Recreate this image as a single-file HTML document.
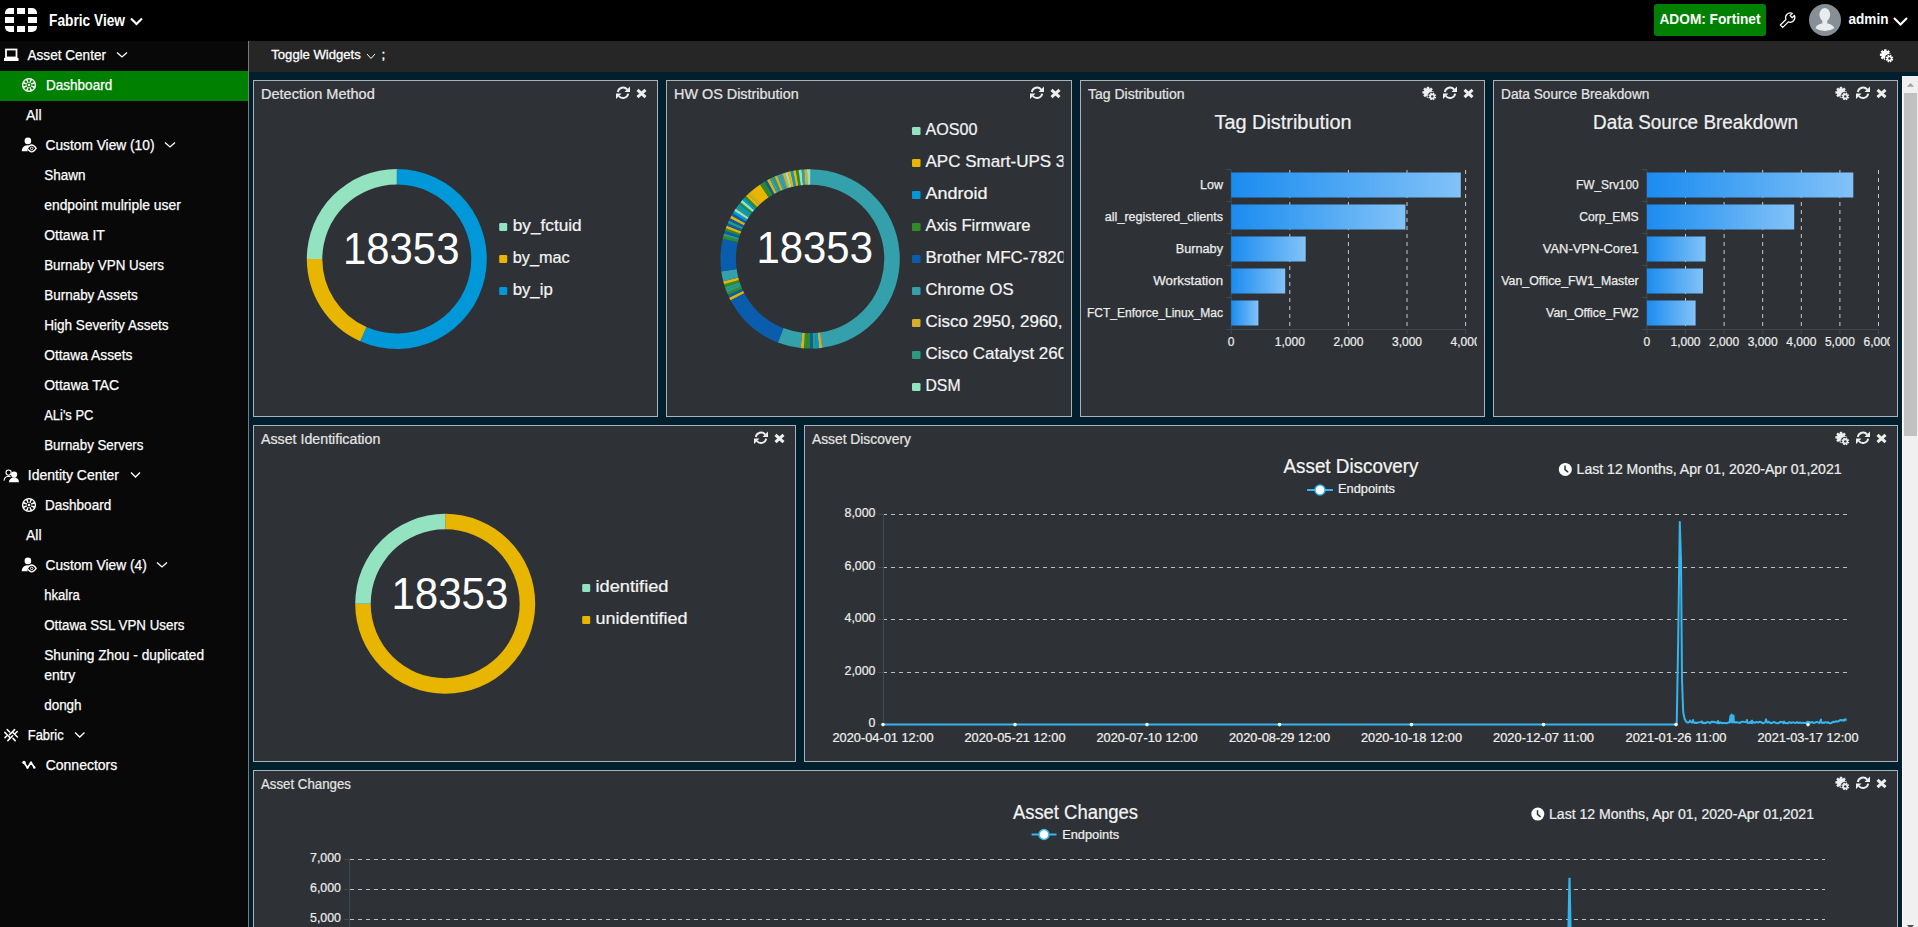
<!DOCTYPE html>
<html><head><meta charset="utf-8"><title>Fabric View</title>
<style>html,body{margin:0;padding:0;background:#021f2d;overflow:hidden}svg{display:block}text{font-family:"Liberation Sans", sans-serif}</style>
</head><body>
<svg width="1918" height="927" viewBox="0 0 1918 927" font-family='"Liberation Sans", sans-serif'>
<rect x="0" y="0" width="1918" height="927" fill="#021f2d"/>
<rect x="0" y="0" width="1918" height="41" fill="#000"/>
<rect x="0" y="41" width="248" height="886" fill="#080808"/>
<rect x="248" y="41" width="1" height="886" fill="#7a7a7a"/>
<rect x="249" y="41" width="1669" height="31" fill="#262626"/>
<clipPath id="logo"><rect x="5" y="8" width="32" height="24" rx="5" ry="5"/></clipPath>
<g clip-path="url(#logo)" fill="#fff">
<rect x="5" y="8" width="9" height="6"/>
<rect x="5" y="17" width="9" height="6"/>
<rect x="5" y="26" width="9" height="6"/>
<rect x="17" y="8" width="8" height="6"/>
<rect x="17" y="26" width="8" height="6"/>
<rect x="28" y="8" width="9" height="6"/>
<rect x="28" y="17" width="9" height="6"/>
<rect x="28" y="26" width="9" height="6"/>
</g>
<text x="49" y="25.5" font-size="16" fill="#fff" text-anchor="start" font-weight="bold" textLength="76" lengthAdjust="spacingAndGlyphs">Fabric View</text>
<polyline points="131,18.5 136.5,24 142,18.5" fill="none" stroke="#fff" stroke-width="2.2"/>
<rect x="1654" y="4" width="112" height="32" rx="3" fill="#008000"/>
<text x="1659.5" y="24" font-size="14" fill="#fff" text-anchor="start" font-weight="bold" textLength="101" lengthAdjust="spacingAndGlyphs">ADOM: Fortinet</text>
<g transform="translate(1790.2,17.6) rotate(45)" fill="none" stroke="#fff" stroke-width="1.25" stroke-linejoin="round"><path d="M-1.7,12.2 L-1.7,4.3 A4.7,4.7 0 0 1 -1.5,-4.45 L-1.5,-1.3 L1.5,-1.3 L1.5,-4.45 A4.7,4.7 0 0 1 1.7,4.3 L1.7,12.2 Z"/></g>
<circle cx="1825" cy="20" r="16" fill="#868e96"/>
<ellipse cx="1824.8" cy="14.6" rx="5.4" ry="6.5" fill="#e9ecef"/>
<rect x="1822.3" y="18" width="5" height="6.2" rx="1.5" fill="#e9ecef"/>
<path d="M1815.5,28.2 Q1816.5,24.6 1821.5,23.6 L1828,23.6 Q1833,24.6 1834.2,28.2 Q1830,31 1824.8,31 Q1819.5,31 1815.5,28.2 Z" fill="#e9ecef"/>
<text x="1848.5" y="24" font-size="14" fill="#fff" text-anchor="start" font-weight="bold" textLength="40" lengthAdjust="spacingAndGlyphs">admin</text>
<polyline points="1894,18 1900.5,24.5 1907,18" fill="none" stroke="#fff" stroke-width="2.2"/>
<text x="271.3" y="58.5" font-size="13.5" fill="#fff" text-anchor="start" font-weight="normal" textLength="89.5" lengthAdjust="spacingAndGlyphs" stroke="#fff" stroke-width="0.3">Toggle Widgets</text>
<polyline points="367,54 371.0,58.5 375,54" fill="none" stroke="#fff" stroke-width="1"/>
<text x="381.5" y="59" font-size="13.5" fill="#fff" text-anchor="start" font-weight="normal" stroke="#fff" stroke-width="0.4">;</text>
<g transform="translate(1880,49) scale(0.92)">
<circle cx="5.8" cy="6.2" r="4.3" fill="#fff"/>
<rect x="4.5" y="0.30000000000000027" width="2.6" height="2.6" fill="#fff" transform="rotate(0.0 5.8 6.2)"/>
<rect x="4.5" y="0.30000000000000027" width="2.6" height="2.6" fill="#fff" transform="rotate(45.0 5.8 6.2)"/>
<rect x="4.5" y="0.30000000000000027" width="2.6" height="2.6" fill="#fff" transform="rotate(90.0 5.8 6.2)"/>
<rect x="4.5" y="0.30000000000000027" width="2.6" height="2.6" fill="#fff" transform="rotate(135.0 5.8 6.2)"/>
<rect x="4.5" y="0.30000000000000027" width="2.6" height="2.6" fill="#fff" transform="rotate(180.0 5.8 6.2)"/>
<rect x="4.5" y="0.30000000000000027" width="2.6" height="2.6" fill="#fff" transform="rotate(225.0 5.8 6.2)"/>
<rect x="4.5" y="0.30000000000000027" width="2.6" height="2.6" fill="#fff" transform="rotate(270.0 5.8 6.2)"/>
<rect x="4.5" y="0.30000000000000027" width="2.6" height="2.6" fill="#fff" transform="rotate(315.0 5.8 6.2)"/>
<circle cx="10.3" cy="10.4" r="5.0" fill="#262626"/>
<circle cx="10.3" cy="10.4" r="3.0" fill="#fff"/>
<rect x="9.5" y="6.2" width="1.6" height="2.2" fill="#fff" transform="rotate(22.5 10.3 10.4)"/>
<rect x="9.5" y="6.2" width="1.6" height="2.2" fill="#fff" transform="rotate(67.5 10.3 10.4)"/>
<rect x="9.5" y="6.2" width="1.6" height="2.2" fill="#fff" transform="rotate(112.5 10.3 10.4)"/>
<rect x="9.5" y="6.2" width="1.6" height="2.2" fill="#fff" transform="rotate(157.5 10.3 10.4)"/>
<rect x="9.5" y="6.2" width="1.6" height="2.2" fill="#fff" transform="rotate(202.5 10.3 10.4)"/>
<rect x="9.5" y="6.2" width="1.6" height="2.2" fill="#fff" transform="rotate(247.5 10.3 10.4)"/>
<rect x="9.5" y="6.2" width="1.6" height="2.2" fill="#fff" transform="rotate(292.5 10.3 10.4)"/>
<rect x="9.5" y="6.2" width="1.6" height="2.2" fill="#fff" transform="rotate(337.5 10.3 10.4)"/>
<circle cx="10.3" cy="10.4" r="1.3" fill="#262626"/>
</g>
<rect x="6" y="49.5" width="10.5" height="8" fill="none" stroke="#fff" stroke-width="1.8"/>
<rect x="4" y="58" width="14.5" height="3" fill="#fff"/>
<text x="27.5" y="60" font-size="14" fill="#fff" text-anchor="start" font-weight="normal" textLength="78.5" lengthAdjust="spacingAndGlyphs" stroke="#fff" stroke-width="0.25">Asset Center</text>
<polyline points="117,52.5 122.0,57 127,52.5" fill="none" stroke="#fff" stroke-width="1.3"/>
<rect x="0" y="71" width="248" height="30" fill="#008000"/>
<circle cx="29" cy="85" r="7.1" fill="#fff"/>
<path d="M31.90,84.40 L34.60,83.65 L34.60,86.35 L31.90,85.60 Z" fill="#008000"/>
<path d="M31.47,86.63 L33.91,88.01 L32.01,89.91 L30.63,87.47 Z" fill="#008000"/>
<path d="M29.60,87.90 L30.35,90.60 L27.65,90.60 L28.40,87.90 Z" fill="#008000"/>
<path d="M27.37,87.47 L25.99,89.91 L24.09,88.01 L26.53,86.63 Z" fill="#008000"/>
<path d="M26.10,85.60 L23.40,86.35 L23.40,83.65 L26.10,84.40 Z" fill="#008000"/>
<path d="M26.53,83.37 L24.09,81.99 L25.99,80.09 L27.37,82.53 Z" fill="#008000"/>
<path d="M28.40,82.10 L27.65,79.40 L30.35,79.40 L29.60,82.10 Z" fill="#008000"/>
<path d="M30.63,82.53 L32.01,80.09 L33.91,81.99 L31.47,83.37 Z" fill="#008000"/>
<circle cx="29" cy="85" r="2.5" fill="#008000"/>
<circle cx="29" cy="85" r="1.3" fill="#fff"/>
<text x="46" y="90" font-size="14" fill="#fff" text-anchor="start" font-weight="normal" textLength="66.2" lengthAdjust="spacingAndGlyphs" stroke="#fff" stroke-width="0.25">Dashboard</text>
<text x="26" y="120" font-size="14" fill="#fff" text-anchor="start" font-weight="normal" stroke="#fff" stroke-width="0.25">All</text>
<circle cx="27.900000000000002" cy="140.9" r="3.3" fill="#fff"/>
<path d="M21.6,151.3 Q22.200000000000003,145.6 27.1,145.2 Q29.1,145.3 30.1,146 L26.8,148.4 L27.8,151.3 Z" fill="#fff"/>
<path d="M27.200000000000003,148.4 Q31.700000000000003,141.6 36.2,148.4 Q31.700000000000003,155.2 27.200000000000003,148.4 Z" fill="#080808" stroke="#fff" stroke-width="1.3"/>
<circle cx="31.700000000000003" cy="148.4" r="1.3" fill="none" stroke="#fff" stroke-width="0.9"/>
<text x="45.5" y="150" font-size="14" fill="#fff" text-anchor="start" font-weight="normal" textLength="109.0" lengthAdjust="spacingAndGlyphs" stroke="#fff" stroke-width="0.25">Custom View (10)</text>
<polyline points="165,142.5 170.0,147 175,142.5" fill="none" stroke="#fff" stroke-width="1.3"/>
<text x="44.2" y="180" font-size="14" fill="#fff" text-anchor="start" font-weight="normal" textLength="41.3" lengthAdjust="spacingAndGlyphs" stroke="#fff" stroke-width="0.25">Shawn</text>
<text x="44.2" y="210" font-size="14" fill="#fff" text-anchor="start" font-weight="normal" textLength="136.7" lengthAdjust="spacingAndGlyphs" stroke="#fff" stroke-width="0.25">endpoint mulriple user</text>
<text x="44.2" y="240" font-size="14" fill="#fff" text-anchor="start" font-weight="normal" stroke="#fff" stroke-width="0.25">Ottawa IT</text>
<text x="44.2" y="270" font-size="14" fill="#fff" text-anchor="start" font-weight="normal" textLength="119.8" lengthAdjust="spacingAndGlyphs" stroke="#fff" stroke-width="0.25">Burnaby VPN Users</text>
<text x="44.2" y="300" font-size="14" fill="#fff" text-anchor="start" font-weight="normal" textLength="93.6" lengthAdjust="spacingAndGlyphs" stroke="#fff" stroke-width="0.25">Burnaby Assets</text>
<text x="44.2" y="330" font-size="14" fill="#fff" text-anchor="start" font-weight="normal" textLength="124.4" lengthAdjust="spacingAndGlyphs" stroke="#fff" stroke-width="0.25">High Severity Assets</text>
<text x="44.2" y="360" font-size="14" fill="#fff" text-anchor="start" font-weight="normal" textLength="88.3" lengthAdjust="spacingAndGlyphs" stroke="#fff" stroke-width="0.25">Ottawa Assets</text>
<text x="44.2" y="390" font-size="14" fill="#fff" text-anchor="start" font-weight="normal" stroke="#fff" stroke-width="0.25">Ottawa TAC</text>
<text x="44.2" y="420" font-size="14" fill="#fff" text-anchor="start" font-weight="normal" textLength="49.2" lengthAdjust="spacingAndGlyphs" stroke="#fff" stroke-width="0.25">ALi's PC</text>
<text x="44.2" y="450" font-size="14" fill="#fff" text-anchor="start" font-weight="normal" textLength="99.2" lengthAdjust="spacingAndGlyphs" stroke="#fff" stroke-width="0.25">Burnaby Servers</text>
<g fill="none" stroke="#fff" stroke-width="1.1"><circle cx="8.6" cy="472.6" r="2.6"/><path d="M4,480.6 Q4.6,476.4 8.4,476.2 Q9.6,476.2 10.6,476.8"/></g>
<g fill="#fff"><circle cx="14.1" cy="474.6" r="3.1"/><path d="M8.8,482.2 Q9.6,477.6 14.1,477.6 Q18.6,477.6 19,482.2 Z"/></g>
<text x="27.8" y="480" font-size="14" fill="#fff" text-anchor="start" font-weight="normal" stroke="#fff" stroke-width="0.25">Identity Center</text>
<polyline points="131,472.5 135.5,477 140,472.5" fill="none" stroke="#fff" stroke-width="1.3"/>
<circle cx="29" cy="505" r="7.1" fill="#fff"/>
<path d="M31.90,504.40 L34.60,503.65 L34.60,506.35 L31.90,505.60 Z" fill="#080808"/>
<path d="M31.47,506.63 L33.91,508.01 L32.01,509.91 L30.63,507.47 Z" fill="#080808"/>
<path d="M29.60,507.90 L30.35,510.60 L27.65,510.60 L28.40,507.90 Z" fill="#080808"/>
<path d="M27.37,507.47 L25.99,509.91 L24.09,508.01 L26.53,506.63 Z" fill="#080808"/>
<path d="M26.10,505.60 L23.40,506.35 L23.40,503.65 L26.10,504.40 Z" fill="#080808"/>
<path d="M26.53,503.37 L24.09,501.99 L25.99,500.09 L27.37,502.53 Z" fill="#080808"/>
<path d="M28.40,502.10 L27.65,499.40 L30.35,499.40 L29.60,502.10 Z" fill="#080808"/>
<path d="M30.63,502.53 L32.01,500.09 L33.91,501.99 L31.47,503.37 Z" fill="#080808"/>
<circle cx="29" cy="505" r="2.5" fill="#080808"/>
<circle cx="29" cy="505" r="1.3" fill="#fff"/>
<text x="45" y="510" font-size="14" fill="#fff" text-anchor="start" font-weight="normal" textLength="66.2" lengthAdjust="spacingAndGlyphs" stroke="#fff" stroke-width="0.25">Dashboard</text>
<text x="26" y="540" font-size="14" fill="#fff" text-anchor="start" font-weight="normal" stroke="#fff" stroke-width="0.25">All</text>
<circle cx="27.900000000000002" cy="560.9" r="3.3" fill="#fff"/>
<path d="M21.6,571.3 Q22.200000000000003,565.6 27.1,565.2 Q29.1,565.3 30.1,566 L26.8,568.4 L27.8,571.3 Z" fill="#fff"/>
<path d="M27.200000000000003,568.4 Q31.700000000000003,561.6 36.2,568.4 Q31.700000000000003,575.2 27.200000000000003,568.4 Z" fill="#080808" stroke="#fff" stroke-width="1.3"/>
<circle cx="31.700000000000003" cy="568.4" r="1.3" fill="none" stroke="#fff" stroke-width="0.9"/>
<text x="45.5" y="570" font-size="14" fill="#fff" text-anchor="start" font-weight="normal" textLength="101.2" lengthAdjust="spacingAndGlyphs" stroke="#fff" stroke-width="0.25">Custom View (4)</text>
<polyline points="157,562.5 162.0,567 167,562.5" fill="none" stroke="#fff" stroke-width="1.3"/>
<text x="44.2" y="600" font-size="14" fill="#fff" text-anchor="start" font-weight="normal" textLength="35.7" lengthAdjust="spacingAndGlyphs" stroke="#fff" stroke-width="0.25">hkalra</text>
<text x="44.2" y="630" font-size="14" fill="#fff" text-anchor="start" font-weight="normal" textLength="140.3" lengthAdjust="spacingAndGlyphs" stroke="#fff" stroke-width="0.25">Ottawa SSL VPN Users</text>
<text x="44.2" y="660" font-size="14" fill="#fff" text-anchor="start" font-weight="normal" textLength="159.9" lengthAdjust="spacingAndGlyphs" stroke="#fff" stroke-width="0.25">Shuning Zhou - duplicated</text>
<text x="44.2" y="680" font-size="14" fill="#fff" text-anchor="start" font-weight="normal" stroke="#fff" stroke-width="0.25">entry</text>
<text x="44.2" y="710" font-size="14" fill="#fff" text-anchor="start" font-weight="normal" textLength="37.4" lengthAdjust="spacingAndGlyphs" stroke="#fff" stroke-width="0.25">dongh</text>
<g stroke="#fff" stroke-width="1.5" fill="none" stroke-linecap="round"><path d="M7.2,729.6 L9.6,732 M14.6,729.6 L9.6,734.6 M4.8,732.4 L7.6,735.2 L10.4,738 M12.4,732 L17.4,737 M7.8,740.6 L12.6,735.8 M13,738.4 L15.2,740.6 M5,737.6 L6.6,736 M15.4,733.2 L17.2,731.6"/></g>
<text x="27.8" y="740" font-size="14" fill="#fff" text-anchor="start" font-weight="normal" textLength="35.9" lengthAdjust="spacingAndGlyphs" stroke="#fff" stroke-width="0.25">Fabric</text>
<polyline points="75,732.5 79.75,737 84.5,732.5" fill="none" stroke="#fff" stroke-width="1.3"/>
<circle cx="24" cy="762.5" r="1.7" fill="#fff"/>
<polyline points="24,762.5 27.5,767.8 31,762.5 34.5,767.8" fill="none" stroke="#fff" stroke-width="1.7" stroke-linejoin="round"/>
<circle cx="31" cy="762.8" r="1.2" fill="#fff"/><circle cx="34.3" cy="767.5" r="1.2" fill="#fff"/><circle cx="27.5" cy="767.5" r="1.2" fill="#fff"/>
<text x="45.7" y="770" font-size="14" fill="#fff" text-anchor="start" font-weight="normal" stroke="#fff" stroke-width="0.25">Connectors</text>
<rect x="253.5" y="80.5" width="404" height="336" fill="#2e3236" stroke="#aab2b9" stroke-width="1"/>
<text x="261" y="98.5" font-size="14" fill="#e4e4e4" text-anchor="start" font-weight="normal" textLength="113.7" lengthAdjust="spacingAndGlyphs" stroke="#e4e4e4" stroke-width="0.22">Detection Method</text>
<path d="M637.5,89.8 L645.5,97.2 M645.5,89.8 L637.5,97.2" stroke="#eee" stroke-width="3" stroke-linecap="butt"/>
<g fill="none" stroke="#eee" stroke-width="1.9"><path d="M617.8,92.0 A5.3,5.3 0 0 1 627.2,89.6"/><path d="M628.2,93.6 A5.3,5.3 0 0 1 618.8,96.0"/></g>
<path d="M630,86.5 L630,92.0 L624.5,92.0 Z" fill="#eee"/>
<path d="M616,99.0 L616,93.5 L621.5,93.5 Z" fill="#eee"/>
<rect x="666.5" y="80.5" width="405" height="336" fill="#2e3236" stroke="#aab2b9" stroke-width="1"/>
<text x="674" y="98.5" font-size="14" fill="#e4e4e4" text-anchor="start" font-weight="normal" textLength="124.7" lengthAdjust="spacingAndGlyphs" stroke="#e4e4e4" stroke-width="0.22">HW OS Distribution</text>
<path d="M1051.5,89.8 L1059.5,97.2 M1059.5,89.8 L1051.5,97.2" stroke="#eee" stroke-width="3" stroke-linecap="butt"/>
<g fill="none" stroke="#eee" stroke-width="1.9"><path d="M1031.8,92.0 A5.3,5.3 0 0 1 1041.2,89.6"/><path d="M1042.2,93.6 A5.3,5.3 0 0 1 1032.8,96.0"/></g>
<path d="M1044,86.5 L1044,92.0 L1038.5,92.0 Z" fill="#eee"/>
<path d="M1030,99.0 L1030,93.5 L1035.5,93.5 Z" fill="#eee"/>
<rect x="1080.5" y="80.5" width="404" height="336" fill="#2e3236" stroke="#aab2b9" stroke-width="1"/>
<text x="1088" y="98.5" font-size="14" fill="#e4e4e4" text-anchor="start" font-weight="normal" stroke="#e4e4e4" stroke-width="0.22">Tag Distribution</text>
<path d="M1464.5,89.8 L1472.5,97.2 M1472.5,89.8 L1464.5,97.2" stroke="#eee" stroke-width="3" stroke-linecap="butt"/>
<g fill="none" stroke="#eee" stroke-width="1.9"><path d="M1444.8,92.0 A5.3,5.3 0 0 1 1454.2,89.6"/><path d="M1455.2,93.6 A5.3,5.3 0 0 1 1445.8,96.0"/></g>
<path d="M1457,86.5 L1457,92.0 L1451.5,92.0 Z" fill="#eee"/>
<path d="M1443,99.0 L1443,93.5 L1448.5,93.5 Z" fill="#eee"/>
<g transform="translate(1422.5,86.5) scale(0.95)">
<circle cx="5.8" cy="6.2" r="4.3" fill="#eee"/>
<rect x="4.5" y="0.30000000000000027" width="2.6" height="2.6" fill="#eee" transform="rotate(0.0 5.8 6.2)"/>
<rect x="4.5" y="0.30000000000000027" width="2.6" height="2.6" fill="#eee" transform="rotate(45.0 5.8 6.2)"/>
<rect x="4.5" y="0.30000000000000027" width="2.6" height="2.6" fill="#eee" transform="rotate(90.0 5.8 6.2)"/>
<rect x="4.5" y="0.30000000000000027" width="2.6" height="2.6" fill="#eee" transform="rotate(135.0 5.8 6.2)"/>
<rect x="4.5" y="0.30000000000000027" width="2.6" height="2.6" fill="#eee" transform="rotate(180.0 5.8 6.2)"/>
<rect x="4.5" y="0.30000000000000027" width="2.6" height="2.6" fill="#eee" transform="rotate(225.0 5.8 6.2)"/>
<rect x="4.5" y="0.30000000000000027" width="2.6" height="2.6" fill="#eee" transform="rotate(270.0 5.8 6.2)"/>
<rect x="4.5" y="0.30000000000000027" width="2.6" height="2.6" fill="#eee" transform="rotate(315.0 5.8 6.2)"/>
<circle cx="10.3" cy="10.4" r="5.0" fill="#2e3236"/>
<circle cx="10.3" cy="10.4" r="3.0" fill="#eee"/>
<rect x="9.5" y="6.2" width="1.6" height="2.2" fill="#eee" transform="rotate(22.5 10.3 10.4)"/>
<rect x="9.5" y="6.2" width="1.6" height="2.2" fill="#eee" transform="rotate(67.5 10.3 10.4)"/>
<rect x="9.5" y="6.2" width="1.6" height="2.2" fill="#eee" transform="rotate(112.5 10.3 10.4)"/>
<rect x="9.5" y="6.2" width="1.6" height="2.2" fill="#eee" transform="rotate(157.5 10.3 10.4)"/>
<rect x="9.5" y="6.2" width="1.6" height="2.2" fill="#eee" transform="rotate(202.5 10.3 10.4)"/>
<rect x="9.5" y="6.2" width="1.6" height="2.2" fill="#eee" transform="rotate(247.5 10.3 10.4)"/>
<rect x="9.5" y="6.2" width="1.6" height="2.2" fill="#eee" transform="rotate(292.5 10.3 10.4)"/>
<rect x="9.5" y="6.2" width="1.6" height="2.2" fill="#eee" transform="rotate(337.5 10.3 10.4)"/>
<circle cx="10.3" cy="10.4" r="1.3" fill="#2e3236"/>
</g>
<rect x="1493.5" y="80.5" width="404" height="336" fill="#2e3236" stroke="#aab2b9" stroke-width="1"/>
<text x="1501" y="98.5" font-size="14" fill="#e4e4e4" text-anchor="start" font-weight="normal" textLength="148.4" lengthAdjust="spacingAndGlyphs" stroke="#e4e4e4" stroke-width="0.22">Data Source Breakdown</text>
<path d="M1877.5,89.8 L1885.5,97.2 M1885.5,89.8 L1877.5,97.2" stroke="#eee" stroke-width="3" stroke-linecap="butt"/>
<g fill="none" stroke="#eee" stroke-width="1.9"><path d="M1857.8,92.0 A5.3,5.3 0 0 1 1867.2,89.6"/><path d="M1868.2,93.6 A5.3,5.3 0 0 1 1858.8,96.0"/></g>
<path d="M1870,86.5 L1870,92.0 L1864.5,92.0 Z" fill="#eee"/>
<path d="M1856,99.0 L1856,93.5 L1861.5,93.5 Z" fill="#eee"/>
<g transform="translate(1835.5,86.5) scale(0.95)">
<circle cx="5.8" cy="6.2" r="4.3" fill="#eee"/>
<rect x="4.5" y="0.30000000000000027" width="2.6" height="2.6" fill="#eee" transform="rotate(0.0 5.8 6.2)"/>
<rect x="4.5" y="0.30000000000000027" width="2.6" height="2.6" fill="#eee" transform="rotate(45.0 5.8 6.2)"/>
<rect x="4.5" y="0.30000000000000027" width="2.6" height="2.6" fill="#eee" transform="rotate(90.0 5.8 6.2)"/>
<rect x="4.5" y="0.30000000000000027" width="2.6" height="2.6" fill="#eee" transform="rotate(135.0 5.8 6.2)"/>
<rect x="4.5" y="0.30000000000000027" width="2.6" height="2.6" fill="#eee" transform="rotate(180.0 5.8 6.2)"/>
<rect x="4.5" y="0.30000000000000027" width="2.6" height="2.6" fill="#eee" transform="rotate(225.0 5.8 6.2)"/>
<rect x="4.5" y="0.30000000000000027" width="2.6" height="2.6" fill="#eee" transform="rotate(270.0 5.8 6.2)"/>
<rect x="4.5" y="0.30000000000000027" width="2.6" height="2.6" fill="#eee" transform="rotate(315.0 5.8 6.2)"/>
<circle cx="10.3" cy="10.4" r="5.0" fill="#2e3236"/>
<circle cx="10.3" cy="10.4" r="3.0" fill="#eee"/>
<rect x="9.5" y="6.2" width="1.6" height="2.2" fill="#eee" transform="rotate(22.5 10.3 10.4)"/>
<rect x="9.5" y="6.2" width="1.6" height="2.2" fill="#eee" transform="rotate(67.5 10.3 10.4)"/>
<rect x="9.5" y="6.2" width="1.6" height="2.2" fill="#eee" transform="rotate(112.5 10.3 10.4)"/>
<rect x="9.5" y="6.2" width="1.6" height="2.2" fill="#eee" transform="rotate(157.5 10.3 10.4)"/>
<rect x="9.5" y="6.2" width="1.6" height="2.2" fill="#eee" transform="rotate(202.5 10.3 10.4)"/>
<rect x="9.5" y="6.2" width="1.6" height="2.2" fill="#eee" transform="rotate(247.5 10.3 10.4)"/>
<rect x="9.5" y="6.2" width="1.6" height="2.2" fill="#eee" transform="rotate(292.5 10.3 10.4)"/>
<rect x="9.5" y="6.2" width="1.6" height="2.2" fill="#eee" transform="rotate(337.5 10.3 10.4)"/>
<circle cx="10.3" cy="10.4" r="1.3" fill="#2e3236"/>
</g>
<rect x="253.5" y="425.5" width="542" height="336" fill="#2e3236" stroke="#aab2b9" stroke-width="1"/>
<text x="261" y="443.5" font-size="14" fill="#e4e4e4" text-anchor="start" font-weight="normal" textLength="119.3" lengthAdjust="spacingAndGlyphs" stroke="#e4e4e4" stroke-width="0.22">Asset Identification</text>
<path d="M775.5,434.8 L783.5,442.2 M783.5,434.8 L775.5,442.2" stroke="#eee" stroke-width="3" stroke-linecap="butt"/>
<g fill="none" stroke="#eee" stroke-width="1.9"><path d="M755.8,437.0 A5.3,5.3 0 0 1 765.2,434.6"/><path d="M766.2,438.6 A5.3,5.3 0 0 1 756.8,441.0"/></g>
<path d="M768,431.5 L768,437.0 L762.5,437.0 Z" fill="#eee"/>
<path d="M754,444.0 L754,438.5 L759.5,438.5 Z" fill="#eee"/>
<rect x="804.5" y="425.5" width="1093" height="336" fill="#2e3236" stroke="#aab2b9" stroke-width="1"/>
<text x="812" y="443.5" font-size="14" fill="#e4e4e4" text-anchor="start" font-weight="normal" textLength="98.9" lengthAdjust="spacingAndGlyphs" stroke="#e4e4e4" stroke-width="0.22">Asset Discovery</text>
<path d="M1877.5,434.8 L1885.5,442.2 M1885.5,434.8 L1877.5,442.2" stroke="#eee" stroke-width="3" stroke-linecap="butt"/>
<g fill="none" stroke="#eee" stroke-width="1.9"><path d="M1857.8,437.0 A5.3,5.3 0 0 1 1867.2,434.6"/><path d="M1868.2,438.6 A5.3,5.3 0 0 1 1858.8,441.0"/></g>
<path d="M1870,431.5 L1870,437.0 L1864.5,437.0 Z" fill="#eee"/>
<path d="M1856,444.0 L1856,438.5 L1861.5,438.5 Z" fill="#eee"/>
<g transform="translate(1835.5,431.5) scale(0.95)">
<circle cx="5.8" cy="6.2" r="4.3" fill="#eee"/>
<rect x="4.5" y="0.30000000000000027" width="2.6" height="2.6" fill="#eee" transform="rotate(0.0 5.8 6.2)"/>
<rect x="4.5" y="0.30000000000000027" width="2.6" height="2.6" fill="#eee" transform="rotate(45.0 5.8 6.2)"/>
<rect x="4.5" y="0.30000000000000027" width="2.6" height="2.6" fill="#eee" transform="rotate(90.0 5.8 6.2)"/>
<rect x="4.5" y="0.30000000000000027" width="2.6" height="2.6" fill="#eee" transform="rotate(135.0 5.8 6.2)"/>
<rect x="4.5" y="0.30000000000000027" width="2.6" height="2.6" fill="#eee" transform="rotate(180.0 5.8 6.2)"/>
<rect x="4.5" y="0.30000000000000027" width="2.6" height="2.6" fill="#eee" transform="rotate(225.0 5.8 6.2)"/>
<rect x="4.5" y="0.30000000000000027" width="2.6" height="2.6" fill="#eee" transform="rotate(270.0 5.8 6.2)"/>
<rect x="4.5" y="0.30000000000000027" width="2.6" height="2.6" fill="#eee" transform="rotate(315.0 5.8 6.2)"/>
<circle cx="10.3" cy="10.4" r="5.0" fill="#2e3236"/>
<circle cx="10.3" cy="10.4" r="3.0" fill="#eee"/>
<rect x="9.5" y="6.2" width="1.6" height="2.2" fill="#eee" transform="rotate(22.5 10.3 10.4)"/>
<rect x="9.5" y="6.2" width="1.6" height="2.2" fill="#eee" transform="rotate(67.5 10.3 10.4)"/>
<rect x="9.5" y="6.2" width="1.6" height="2.2" fill="#eee" transform="rotate(112.5 10.3 10.4)"/>
<rect x="9.5" y="6.2" width="1.6" height="2.2" fill="#eee" transform="rotate(157.5 10.3 10.4)"/>
<rect x="9.5" y="6.2" width="1.6" height="2.2" fill="#eee" transform="rotate(202.5 10.3 10.4)"/>
<rect x="9.5" y="6.2" width="1.6" height="2.2" fill="#eee" transform="rotate(247.5 10.3 10.4)"/>
<rect x="9.5" y="6.2" width="1.6" height="2.2" fill="#eee" transform="rotate(292.5 10.3 10.4)"/>
<rect x="9.5" y="6.2" width="1.6" height="2.2" fill="#eee" transform="rotate(337.5 10.3 10.4)"/>
<circle cx="10.3" cy="10.4" r="1.3" fill="#2e3236"/>
</g>
<rect x="253.5" y="770.5" width="1644" height="170" fill="#2e3236" stroke="#aab2b9" stroke-width="1"/>
<text x="261" y="788.5" font-size="14" fill="#e4e4e4" text-anchor="start" font-weight="normal" textLength="89.9" lengthAdjust="spacingAndGlyphs" stroke="#e4e4e4" stroke-width="0.22">Asset Changes</text>
<path d="M1877.5,779.8 L1885.5,787.2 M1885.5,779.8 L1877.5,787.2" stroke="#eee" stroke-width="3" stroke-linecap="butt"/>
<g fill="none" stroke="#eee" stroke-width="1.9"><path d="M1857.8,782.0 A5.3,5.3 0 0 1 1867.2,779.5999999999999"/><path d="M1868.2,783.5999999999999 A5.3,5.3 0 0 1 1858.8,786.0"/></g>
<path d="M1870,776.5 L1870,782.0 L1864.5,782.0 Z" fill="#eee"/>
<path d="M1856,789.0 L1856,783.5 L1861.5,783.5 Z" fill="#eee"/>
<g transform="translate(1835.5,776.5) scale(0.95)">
<circle cx="5.8" cy="6.2" r="4.3" fill="#eee"/>
<rect x="4.5" y="0.30000000000000027" width="2.6" height="2.6" fill="#eee" transform="rotate(0.0 5.8 6.2)"/>
<rect x="4.5" y="0.30000000000000027" width="2.6" height="2.6" fill="#eee" transform="rotate(45.0 5.8 6.2)"/>
<rect x="4.5" y="0.30000000000000027" width="2.6" height="2.6" fill="#eee" transform="rotate(90.0 5.8 6.2)"/>
<rect x="4.5" y="0.30000000000000027" width="2.6" height="2.6" fill="#eee" transform="rotate(135.0 5.8 6.2)"/>
<rect x="4.5" y="0.30000000000000027" width="2.6" height="2.6" fill="#eee" transform="rotate(180.0 5.8 6.2)"/>
<rect x="4.5" y="0.30000000000000027" width="2.6" height="2.6" fill="#eee" transform="rotate(225.0 5.8 6.2)"/>
<rect x="4.5" y="0.30000000000000027" width="2.6" height="2.6" fill="#eee" transform="rotate(270.0 5.8 6.2)"/>
<rect x="4.5" y="0.30000000000000027" width="2.6" height="2.6" fill="#eee" transform="rotate(315.0 5.8 6.2)"/>
<circle cx="10.3" cy="10.4" r="5.0" fill="#2e3236"/>
<circle cx="10.3" cy="10.4" r="3.0" fill="#eee"/>
<rect x="9.5" y="6.2" width="1.6" height="2.2" fill="#eee" transform="rotate(22.5 10.3 10.4)"/>
<rect x="9.5" y="6.2" width="1.6" height="2.2" fill="#eee" transform="rotate(67.5 10.3 10.4)"/>
<rect x="9.5" y="6.2" width="1.6" height="2.2" fill="#eee" transform="rotate(112.5 10.3 10.4)"/>
<rect x="9.5" y="6.2" width="1.6" height="2.2" fill="#eee" transform="rotate(157.5 10.3 10.4)"/>
<rect x="9.5" y="6.2" width="1.6" height="2.2" fill="#eee" transform="rotate(202.5 10.3 10.4)"/>
<rect x="9.5" y="6.2" width="1.6" height="2.2" fill="#eee" transform="rotate(247.5 10.3 10.4)"/>
<rect x="9.5" y="6.2" width="1.6" height="2.2" fill="#eee" transform="rotate(292.5 10.3 10.4)"/>
<rect x="9.5" y="6.2" width="1.6" height="2.2" fill="#eee" transform="rotate(337.5 10.3 10.4)"/>
<circle cx="10.3" cy="10.4" r="1.3" fill="#2e3236"/>
</g>
<path d="M396.80,169.00 A90,90 0 1 1 360.19,341.22 L366.50,327.06 A74.5,74.5 0 1 0 396.80,184.50 Z" fill="#0098d8"/>
<path d="M360.19,341.22 A90,90 0 0 1 306.80,259.00 L322.30,259.00 A74.5,74.5 0 0 0 366.50,327.06 Z" fill="#e8b600"/>
<path d="M306.80,259.00 A90,90 0 0 1 396.80,169.00 L396.80,184.50 A74.5,74.5 0 0 0 322.30,259.00 Z" fill="#93e2c0"/>
<text x="401.2" y="264" font-size="44.5" fill="#fff" text-anchor="middle" font-weight="normal" textLength="116.5" lengthAdjust="spacingAndGlyphs">18353</text>
<rect x="499.2" y="223" width="8" height="8" rx="1.2" fill="#93e2c0"/>
<text x="512.7" y="231" font-size="17" fill="#f4f4f4" text-anchor="start" font-weight="normal" textLength="69" lengthAdjust="spacingAndGlyphs" stroke="#f4f4f4" stroke-width="0.22">by_fctuid</text>
<rect x="499.2" y="255" width="8" height="8" rx="1.2" fill="#e8b600"/>
<text x="512.7" y="263" font-size="17" fill="#f4f4f4" text-anchor="start" font-weight="normal" textLength="57" lengthAdjust="spacingAndGlyphs" stroke="#f4f4f4" stroke-width="0.22">by_mac</text>
<rect x="499.2" y="287" width="8" height="8" rx="1.2" fill="#0098d8"/>
<text x="512.7" y="295" font-size="17" fill="#f4f4f4" text-anchor="start" font-weight="normal" textLength="40" lengthAdjust="spacingAndGlyphs" stroke="#f4f4f4" stroke-width="0.22">by_ip</text>
<path d="M810.10,169.20 A89.7,89.7 0 0 1 822.04,347.80 L819.98,332.44 A74.2,74.2 0 0 0 810.10,184.70 Z" fill="#34a0ac"/>
<path d="M822.27,347.77 A89.7,89.7 0 0 1 818.98,348.16 L817.44,332.74 A74.2,74.2 0 0 0 820.17,332.41 Z" fill="#d4b02a"/>
<path d="M819.21,348.14 A89.7,89.7 0 0 1 815.90,348.41 L814.90,332.94 A74.2,74.2 0 0 0 817.64,332.72 Z" fill="#0098d8"/>
<path d="M816.13,348.40 A89.7,89.7 0 0 1 812.82,348.56 L812.35,333.07 A74.2,74.2 0 0 0 815.09,332.93 Z" fill="#2a9a80"/>
<path d="M813.05,348.55 A89.7,89.7 0 0 1 809.73,348.60 L809.79,333.10 A74.2,74.2 0 0 0 812.54,333.06 Z" fill="#0a5cac"/>
<path d="M809.97,348.60 A89.7,89.7 0 0 1 806.65,348.53 L807.24,333.04 A74.2,74.2 0 0 0 809.99,333.10 Z" fill="#2f8a2a"/>
<path d="M806.88,348.54 A89.7,89.7 0 0 1 803.56,348.36 L804.69,332.90 A74.2,74.2 0 0 0 807.44,333.05 Z" fill="#2f8a2a"/>
<path d="M803.80,348.38 A89.7,89.7 0 0 1 800.49,348.08 L802.15,332.67 A74.2,74.2 0 0 0 804.89,332.92 Z" fill="#d4b02a"/>
<path d="M800.72,348.11 A89.7,89.7 0 0 1 777.74,342.56 L783.33,328.10 A74.2,74.2 0 0 0 802.34,332.69 Z" fill="#34a0ac"/>
<path d="M777.95,342.64 A89.7,89.7 0 0 1 731.76,302.59 L745.30,295.04 A74.2,74.2 0 0 0 783.51,328.17 Z" fill="#0a5cac"/>
<path d="M731.88,302.80 A89.7,89.7 0 0 1 730.40,300.06 L744.17,292.95 A74.2,74.2 0 0 0 745.39,295.21 Z" fill="#0a5cac"/>
<path d="M730.51,300.27 A89.7,89.7 0 0 1 729.12,297.48 L743.11,290.81 A74.2,74.2 0 0 0 744.26,293.12 Z" fill="#e8b600"/>
<path d="M729.22,297.69 A89.7,89.7 0 0 1 727.93,294.87 L742.13,288.65 A74.2,74.2 0 0 0 743.20,290.99 Z" fill="#0a5cac"/>
<path d="M728.02,295.08 A89.7,89.7 0 0 1 726.81,292.21 L741.21,286.46 A74.2,74.2 0 0 0 742.20,288.83 Z" fill="#2f8a2a"/>
<path d="M726.90,292.43 A89.7,89.7 0 0 1 725.79,289.52 L740.36,284.23 A74.2,74.2 0 0 0 741.28,286.64 Z" fill="#2a9a80"/>
<path d="M725.87,289.74 A89.7,89.7 0 0 1 724.85,286.80 L739.58,281.98 A74.2,74.2 0 0 0 740.42,284.41 Z" fill="#2a9a80"/>
<path d="M724.92,287.03 A89.7,89.7 0 0 1 724.00,284.06 L738.88,279.71 A74.2,74.2 0 0 0 739.64,282.17 Z" fill="#2f8a2a"/>
<path d="M724.07,284.28 A89.7,89.7 0 0 1 723.24,281.28 L738.25,277.42 A74.2,74.2 0 0 0 738.93,279.90 Z" fill="#e8b600"/>
<path d="M723.30,281.51 A89.7,89.7 0 0 1 721.24,271.15 L736.60,269.03 A74.2,74.2 0 0 0 738.30,277.60 Z" fill="#34a0ac"/>
<path d="M721.27,271.38 A89.7,89.7 0 0 1 722.75,238.49 L737.85,242.02 A74.2,74.2 0 0 0 736.62,269.23 Z" fill="#0a5cac"/>
<path d="M722.70,238.72 A89.7,89.7 0 0 1 723.42,235.84 L738.39,239.82 A74.2,74.2 0 0 0 737.80,242.21 Z" fill="#2f8a2a"/>
<path d="M723.36,236.06 A89.7,89.7 0 0 1 724.16,233.20 L739.01,237.64 A74.2,74.2 0 0 0 738.35,240.01 Z" fill="#2a9a80"/>
<path d="M724.09,233.42 A89.7,89.7 0 0 1 724.99,230.59 L739.69,235.48 A74.2,74.2 0 0 0 738.96,237.83 Z" fill="#0a5cac"/>
<path d="M724.91,230.81 A89.7,89.7 0 0 1 725.89,228.00 L740.44,233.34 A74.2,74.2 0 0 0 739.63,235.66 Z" fill="#2f8a2a"/>
<path d="M725.81,228.22 A89.7,89.7 0 0 1 726.87,225.44 L741.25,231.22 A74.2,74.2 0 0 0 740.37,233.52 Z" fill="#e8b600"/>
<path d="M726.79,225.66 A89.7,89.7 0 0 1 727.93,222.92 L742.13,229.13 A74.2,74.2 0 0 0 741.18,231.40 Z" fill="#0a5cac"/>
<path d="M727.84,223.13 A89.7,89.7 0 0 1 729.07,220.42 L743.07,227.07 A74.2,74.2 0 0 0 742.05,229.31 Z" fill="#2a9a80"/>
<path d="M728.97,220.64 A89.7,89.7 0 0 1 730.28,217.97 L744.08,225.04 A74.2,74.2 0 0 0 742.99,227.25 Z" fill="#0a5cac"/>
<path d="M730.18,218.18 A89.7,89.7 0 0 1 731.57,215.55 L745.14,223.04 A74.2,74.2 0 0 0 743.99,225.21 Z" fill="#e8b600"/>
<path d="M731.46,215.76 A89.7,89.7 0 0 1 732.93,213.17 L746.27,221.07 A74.2,74.2 0 0 0 745.05,223.21 Z" fill="#0a5cac"/>
<path d="M732.81,213.37 A89.7,89.7 0 0 1 734.36,210.84 L747.45,219.14 A74.2,74.2 0 0 0 746.17,221.24 Z" fill="#0098d8"/>
<path d="M734.24,211.03 A89.7,89.7 0 0 1 735.87,208.55 L748.69,217.25 A74.2,74.2 0 0 0 747.35,219.31 Z" fill="#93e2c0"/>
<path d="M735.74,208.74 A89.7,89.7 0 0 1 737.44,206.30 L749.99,215.39 A74.2,74.2 0 0 0 748.59,217.41 Z" fill="#2a9a80"/>
<path d="M737.30,206.49 A89.7,89.7 0 0 1 739.08,204.11 L751.35,213.58 A74.2,74.2 0 0 0 749.88,215.55 Z" fill="#0098d8"/>
<path d="M738.94,204.29 A89.7,89.7 0 0 1 740.79,201.96 L752.76,211.80 A74.2,74.2 0 0 0 751.23,213.73 Z" fill="#2f8a2a"/>
<path d="M740.64,202.15 A89.7,89.7 0 0 1 742.56,199.87 L754.23,210.07 A74.2,74.2 0 0 0 752.64,211.95 Z" fill="#93e2c0"/>
<path d="M742.40,200.05 A89.7,89.7 0 0 1 744.39,197.84 L755.75,208.39 A74.2,74.2 0 0 0 754.10,210.22 Z" fill="#0098d8"/>
<path d="M744.23,198.01 A89.7,89.7 0 0 1 746.29,195.86 L757.31,206.75 A74.2,74.2 0 0 0 755.61,208.53 Z" fill="#2f8a2a"/>
<path d="M746.12,196.03 A89.7,89.7 0 0 1 748.24,193.94 L758.93,205.17 A74.2,74.2 0 0 0 757.18,206.89 Z" fill="#e8b600"/>
<path d="M748.07,194.10 A89.7,89.7 0 0 1 750.25,192.08 L760.60,203.63 A74.2,74.2 0 0 0 758.79,205.30 Z" fill="#d4b02a"/>
<path d="M750.08,192.24 A89.7,89.7 0 0 1 760.14,184.40 L768.77,197.28 A74.2,74.2 0 0 0 760.45,203.76 Z" fill="#e8b600"/>
<path d="M759.94,184.54 A89.7,89.7 0 0 1 762.47,182.89 L770.70,196.02 A74.2,74.2 0 0 0 768.61,197.39 Z" fill="#2f8a2a"/>
<path d="M762.27,183.02 A89.7,89.7 0 0 1 764.85,181.45 L772.67,194.83 A74.2,74.2 0 0 0 770.54,196.13 Z" fill="#2f8a2a"/>
<path d="M764.65,181.57 A89.7,89.7 0 0 1 767.28,180.08 L774.68,193.70 A74.2,74.2 0 0 0 772.50,194.93 Z" fill="#0a5cac"/>
<path d="M767.07,180.19 A89.7,89.7 0 0 1 769.74,178.79 L776.72,192.63 A74.2,74.2 0 0 0 774.51,193.80 Z" fill="#e8b600"/>
<path d="M769.53,178.90 A89.7,89.7 0 0 1 772.25,177.58 L778.79,191.63 A74.2,74.2 0 0 0 776.54,192.72 Z" fill="#34a0ac"/>
<path d="M772.03,177.68 A89.7,89.7 0 0 1 774.79,176.44 L780.89,190.69 A74.2,74.2 0 0 0 778.61,191.71 Z" fill="#2a9a80"/>
<path d="M774.57,176.54 A89.7,89.7 0 0 1 777.36,175.39 L783.02,189.82 A74.2,74.2 0 0 0 780.71,190.77 Z" fill="#d4b02a"/>
<path d="M777.14,175.47 A89.7,89.7 0 0 1 779.97,174.41 L785.18,189.01 A74.2,74.2 0 0 0 782.84,189.89 Z" fill="#34a0ac"/>
<path d="M779.75,174.49 A89.7,89.7 0 0 1 782.60,173.52 L787.36,188.27 A74.2,74.2 0 0 0 784.99,189.08 Z" fill="#34a0ac"/>
<path d="M782.38,173.59 A89.7,89.7 0 0 1 785.27,172.71 L789.56,187.60 A74.2,74.2 0 0 0 787.17,188.33 Z" fill="#d4b02a"/>
<path d="M785.04,172.77 A89.7,89.7 0 0 1 787.95,171.98 L791.78,187.00 A74.2,74.2 0 0 0 789.37,187.65 Z" fill="#93e2c0"/>
<path d="M787.73,172.04 A89.7,89.7 0 0 1 790.66,171.33 L794.02,186.46 A74.2,74.2 0 0 0 791.59,187.05 Z" fill="#e8b600"/>
<path d="M790.43,171.38 A89.7,89.7 0 0 1 793.39,170.77 L796.27,186.00 A74.2,74.2 0 0 0 793.83,186.51 Z" fill="#0098d8"/>
<path d="M793.16,170.82 A89.7,89.7 0 0 1 796.13,170.29 L798.54,185.61 A74.2,74.2 0 0 0 796.08,186.04 Z" fill="#e8b600"/>
<path d="M795.90,170.33 A89.7,89.7 0 0 1 798.88,169.90 L800.82,185.28 A74.2,74.2 0 0 0 798.35,185.64 Z" fill="#2f8a2a"/>
<path d="M798.65,169.93 A89.7,89.7 0 0 1 801.65,169.60 L803.11,185.03 A74.2,74.2 0 0 0 800.63,185.31 Z" fill="#93e2c0"/>
<path d="M801.42,169.62 A89.7,89.7 0 0 1 804.42,169.38 L805.41,184.85 A74.2,74.2 0 0 0 802.92,185.05 Z" fill="#34a0ac"/>
<path d="M804.19,169.39 A89.7,89.7 0 0 1 807.20,169.25 L807.70,184.74 A74.2,74.2 0 0 0 805.21,184.86 Z" fill="#d4b02a"/>
<path d="M806.97,169.25 A89.7,89.7 0 0 1 810.33,169.20 L810.29,184.70 A74.2,74.2 0 0 0 807.51,184.75 Z" fill="#93e2c0"/>
<text x="814.7" y="263.2" font-size="44.5" fill="#fff" text-anchor="middle" font-weight="normal" textLength="116.5" lengthAdjust="spacingAndGlyphs">18353</text>
<clipPath id="hwclip"><rect x="900" y="100" width="163.5" height="300"/></clipPath>
<g clip-path="url(#hwclip)">
<rect x="912" y="127" width="8.5" height="8" rx="1.2" fill="#93e2c0"/>
<text x="925.5" y="135" font-size="17" fill="#f4f4f4" text-anchor="start" font-weight="normal" textLength="52" lengthAdjust="spacingAndGlyphs" stroke="#f4f4f4" stroke-width="0.22">AOS00</text>
<rect x="912" y="159" width="8.5" height="8" rx="1.2" fill="#e8b600"/>
<text x="925.5" y="167" font-size="17" fill="#f4f4f4" text-anchor="start" font-weight="normal" stroke="#f4f4f4" stroke-width="0.22">APC Smart-UPS 3000</text>
<rect x="912" y="191" width="8.5" height="8" rx="1.2" fill="#0098d8"/>
<text x="925.5" y="199" font-size="17" fill="#f4f4f4" text-anchor="start" font-weight="normal" textLength="62" lengthAdjust="spacingAndGlyphs" stroke="#f4f4f4" stroke-width="0.22">Android</text>
<rect x="912" y="223" width="8.5" height="8" rx="1.2" fill="#2f8a2a"/>
<text x="925.5" y="231" font-size="17" fill="#f4f4f4" text-anchor="start" font-weight="normal" textLength="105" lengthAdjust="spacingAndGlyphs" stroke="#f4f4f4" stroke-width="0.22">Axis Firmware</text>
<rect x="912" y="255" width="8.5" height="8" rx="1.2" fill="#0a5cac"/>
<text x="925.5" y="263" font-size="17" fill="#f4f4f4" text-anchor="start" font-weight="normal" stroke="#f4f4f4" stroke-width="0.22">Brother MFC-7820N</text>
<rect x="912" y="287" width="8.5" height="8" rx="1.2" fill="#34a0ac"/>
<text x="925.5" y="295" font-size="17" fill="#f4f4f4" text-anchor="start" font-weight="normal" textLength="88" lengthAdjust="spacingAndGlyphs" stroke="#f4f4f4" stroke-width="0.22">Chrome OS</text>
<rect x="912" y="319" width="8.5" height="8" rx="1.2" fill="#d4b02a"/>
<text x="925.5" y="327" font-size="17" fill="#f4f4f4" text-anchor="start" font-weight="normal" stroke="#f4f4f4" stroke-width="0.22">Cisco 2950, 2960, 3560</text>
<rect x="912" y="351" width="8.5" height="8" rx="1.2" fill="#2a9a80"/>
<text x="925.5" y="359" font-size="17" fill="#f4f4f4" text-anchor="start" font-weight="normal" stroke="#f4f4f4" stroke-width="0.22">Cisco Catalyst 2600</text>
<rect x="912" y="383" width="8.5" height="8" rx="1.2" fill="#93e2c0"/>
<text x="925.5" y="391" font-size="17" fill="#f4f4f4" text-anchor="start" font-weight="normal" textLength="35" lengthAdjust="spacingAndGlyphs" stroke="#f4f4f4" stroke-width="0.22">DSM</text>
</g>
<path d="M445.20,513.80 A90,90 0 1 1 355.20,603.80 L370.70,603.80 A74.5,74.5 0 1 0 445.20,529.30 Z" fill="#e8b600"/>
<path d="M355.20,603.80 A90,90 0 0 1 445.20,513.80 L445.20,529.30 A74.5,74.5 0 0 0 370.70,603.80 Z" fill="#93e2c0"/>
<text x="449.9" y="609" font-size="44.5" fill="#fff" text-anchor="middle" font-weight="normal" textLength="117" lengthAdjust="spacingAndGlyphs">18353</text>
<rect x="582.2" y="584" width="8" height="8" rx="1.2" fill="#93e2c0"/>
<text x="595.5" y="592" font-size="17" fill="#f4f4f4" text-anchor="start" font-weight="normal" textLength="73" lengthAdjust="spacingAndGlyphs" stroke="#f4f4f4" stroke-width="0.22">identified</text>
<rect x="582.2" y="616" width="8" height="8" rx="1.2" fill="#e8b600"/>
<text x="595.5" y="624" font-size="17" fill="#f4f4f4" text-anchor="start" font-weight="normal" textLength="92" lengthAdjust="spacingAndGlyphs" stroke="#f4f4f4" stroke-width="0.22">unidentified</text>
<defs><linearGradient id="bg1" x1="0" x2="1" y1="0" y2="0"><stop offset="0" stop-color="#1a8cf0"/><stop offset="1" stop-color="#82c2f8"/></linearGradient></defs>
<text x="1214.5" y="129" font-size="20" fill="#f0f0f0" text-anchor="start" font-weight="normal" textLength="137" lengthAdjust="spacingAndGlyphs" stroke="#f0f0f0" stroke-width="0.22">Tag Distribution</text>
<line x1="1289.8" y1="170" x2="1289.8" y2="329" stroke="#c8c8c8" stroke-width="1" stroke-dasharray="4,4"/>
<line x1="1348.4" y1="170" x2="1348.4" y2="329" stroke="#c8c8c8" stroke-width="1" stroke-dasharray="4,4"/>
<line x1="1407.0" y1="170" x2="1407.0" y2="329" stroke="#c8c8c8" stroke-width="1" stroke-dasharray="4,4"/>
<line x1="1465.6" y1="170" x2="1465.6" y2="329" stroke="#c8c8c8" stroke-width="1" stroke-dasharray="4,4"/>
<line x1="1231.2" y1="170" x2="1231.2" y2="329" stroke="#3c4a56" stroke-width="1"/>
<line x1="1231.2" y1="329.5" x2="1465.6000000000001" y2="329.5" stroke="#3c4a56" stroke-width="1"/>
<line x1="1226.2" y1="169.5" x2="1231.2" y2="169.5" stroke="#3c4a56" stroke-width="1"/>
<line x1="1226.2" y1="201.5" x2="1231.2" y2="201.5" stroke="#3c4a56" stroke-width="1"/>
<line x1="1226.2" y1="233.5" x2="1231.2" y2="233.5" stroke="#3c4a56" stroke-width="1"/>
<line x1="1226.2" y1="265.5" x2="1231.2" y2="265.5" stroke="#3c4a56" stroke-width="1"/>
<line x1="1226.2" y1="297.5" x2="1231.2" y2="297.5" stroke="#3c4a56" stroke-width="1"/>
<line x1="1226.2" y1="329.5" x2="1231.2" y2="329.5" stroke="#3c4a56" stroke-width="1"/>
<line x1="1231.2" y1="329.5" x2="1231.2" y2="334" stroke="#3c4a56" stroke-width="1"/>
<line x1="1289.8" y1="329.5" x2="1289.8" y2="334" stroke="#3c4a56" stroke-width="1"/>
<line x1="1348.4" y1="329.5" x2="1348.4" y2="334" stroke="#3c4a56" stroke-width="1"/>
<line x1="1407.0" y1="329.5" x2="1407.0" y2="334" stroke="#3c4a56" stroke-width="1"/>
<line x1="1465.6" y1="329.5" x2="1465.6" y2="334" stroke="#3c4a56" stroke-width="1"/>
<rect x="1231.2" y="172.5" width="229.6" height="25" fill="url(#bg1)"/>
<text x="1223" y="188.7" font-size="12.5" fill="#ececec" text-anchor="end" font-weight="normal" stroke="#ececec" stroke-width="0.25">Low</text>
<rect x="1231.2" y="204.5" width="174.2" height="25" fill="url(#bg1)"/>
<text x="1223" y="220.7" font-size="12.5" fill="#ececec" text-anchor="end" font-weight="normal" textLength="118.2" lengthAdjust="spacingAndGlyphs" stroke="#ececec" stroke-width="0.25">all_registered_clients</text>
<rect x="1231.2" y="236.5" width="74.5" height="25" fill="url(#bg1)"/>
<text x="1223" y="252.7" font-size="12.5" fill="#ececec" text-anchor="end" font-weight="normal" textLength="47.3" lengthAdjust="spacingAndGlyphs" stroke="#ececec" stroke-width="0.25">Burnaby</text>
<rect x="1231.2" y="268.5" width="54.0" height="25" fill="url(#bg1)"/>
<text x="1223" y="284.7" font-size="12.5" fill="#ececec" text-anchor="end" font-weight="normal" textLength="69.7" lengthAdjust="spacingAndGlyphs" stroke="#ececec" stroke-width="0.25">Workstation</text>
<rect x="1231.2" y="300.5" width="27.2" height="25" fill="url(#bg1)"/>
<text x="1223" y="316.7" font-size="12.5" fill="#ececec" text-anchor="end" font-weight="normal" textLength="136" lengthAdjust="spacingAndGlyphs" stroke="#ececec" stroke-width="0.25">FCT_Enforce_Linux_Mac</text>
<clipPath id="cl1231"><rect x="1201.2" y="330" width="275.79999999999995" height="20"/></clipPath><g clip-path="url(#cl1231)">
<text x="1231.2" y="345.8" font-size="12" fill="#ececec" text-anchor="middle" font-weight="normal" stroke="#ececec" stroke-width="0.22">0</text>
<text x="1289.8" y="345.8" font-size="12" fill="#ececec" text-anchor="middle" font-weight="normal" stroke="#ececec" stroke-width="0.22">1,000</text>
<text x="1348.4" y="345.8" font-size="12" fill="#ececec" text-anchor="middle" font-weight="normal" stroke="#ececec" stroke-width="0.22">2,000</text>
<text x="1407.0" y="345.8" font-size="12" fill="#ececec" text-anchor="middle" font-weight="normal" stroke="#ececec" stroke-width="0.22">3,000</text>
<text x="1465.6000000000001" y="345.8" font-size="12" fill="#ececec" text-anchor="middle" font-weight="normal" stroke="#ececec" stroke-width="0.22">4,000</text>
</g>
<text x="1593" y="129" font-size="20" fill="#f0f0f0" text-anchor="start" font-weight="normal" textLength="205" lengthAdjust="spacingAndGlyphs" stroke="#f0f0f0" stroke-width="0.22">Data Source Breakdown</text>
<line x1="1685.5" y1="170" x2="1685.5" y2="329" stroke="#c8c8c8" stroke-width="1" stroke-dasharray="4,4"/>
<line x1="1724.1" y1="170" x2="1724.1" y2="329" stroke="#c8c8c8" stroke-width="1" stroke-dasharray="4,4"/>
<line x1="1762.7" y1="170" x2="1762.7" y2="329" stroke="#c8c8c8" stroke-width="1" stroke-dasharray="4,4"/>
<line x1="1801.3" y1="170" x2="1801.3" y2="329" stroke="#c8c8c8" stroke-width="1" stroke-dasharray="4,4"/>
<line x1="1839.9" y1="170" x2="1839.9" y2="329" stroke="#c8c8c8" stroke-width="1" stroke-dasharray="4,4"/>
<line x1="1878.5" y1="170" x2="1878.5" y2="329" stroke="#c8c8c8" stroke-width="1" stroke-dasharray="4,4"/>
<line x1="1646.9" y1="170" x2="1646.9" y2="329" stroke="#3c4a56" stroke-width="1"/>
<line x1="1646.9" y1="329.5" x2="1878.5" y2="329.5" stroke="#3c4a56" stroke-width="1"/>
<line x1="1641.9" y1="169.5" x2="1646.9" y2="169.5" stroke="#3c4a56" stroke-width="1"/>
<line x1="1641.9" y1="201.5" x2="1646.9" y2="201.5" stroke="#3c4a56" stroke-width="1"/>
<line x1="1641.9" y1="233.5" x2="1646.9" y2="233.5" stroke="#3c4a56" stroke-width="1"/>
<line x1="1641.9" y1="265.5" x2="1646.9" y2="265.5" stroke="#3c4a56" stroke-width="1"/>
<line x1="1641.9" y1="297.5" x2="1646.9" y2="297.5" stroke="#3c4a56" stroke-width="1"/>
<line x1="1641.9" y1="329.5" x2="1646.9" y2="329.5" stroke="#3c4a56" stroke-width="1"/>
<line x1="1646.9" y1="329.5" x2="1646.9" y2="334" stroke="#3c4a56" stroke-width="1"/>
<line x1="1685.5" y1="329.5" x2="1685.5" y2="334" stroke="#3c4a56" stroke-width="1"/>
<line x1="1724.1" y1="329.5" x2="1724.1" y2="334" stroke="#3c4a56" stroke-width="1"/>
<line x1="1762.7" y1="329.5" x2="1762.7" y2="334" stroke="#3c4a56" stroke-width="1"/>
<line x1="1801.3" y1="329.5" x2="1801.3" y2="334" stroke="#3c4a56" stroke-width="1"/>
<line x1="1839.9" y1="329.5" x2="1839.9" y2="334" stroke="#3c4a56" stroke-width="1"/>
<line x1="1878.5" y1="329.5" x2="1878.5" y2="334" stroke="#3c4a56" stroke-width="1"/>
<rect x="1646.9" y="172.5" width="206.4" height="25" fill="url(#bg1)"/>
<text x="1638.7" y="188.7" font-size="12.5" fill="#ececec" text-anchor="end" font-weight="normal" textLength="62.8" lengthAdjust="spacingAndGlyphs" stroke="#ececec" stroke-width="0.25">FW_Srv100</text>
<rect x="1646.9" y="204.5" width="147.3" height="25" fill="url(#bg1)"/>
<text x="1638.7" y="220.7" font-size="12.5" fill="#ececec" text-anchor="end" font-weight="normal" textLength="59.5" lengthAdjust="spacingAndGlyphs" stroke="#ececec" stroke-width="0.25">Corp_EMS</text>
<rect x="1646.9" y="236.5" width="58.7" height="25" fill="url(#bg1)"/>
<text x="1638.7" y="252.7" font-size="12.5" fill="#ececec" text-anchor="end" font-weight="normal" textLength="95.9" lengthAdjust="spacingAndGlyphs" stroke="#ececec" stroke-width="0.25">VAN-VPN-Core1</text>
<rect x="1646.9" y="268.5" width="56.1" height="25" fill="url(#bg1)"/>
<text x="1638.7" y="284.7" font-size="12.5" fill="#ececec" text-anchor="end" font-weight="normal" textLength="137.4" lengthAdjust="spacingAndGlyphs" stroke="#ececec" stroke-width="0.25">Van_Office_FW1_Master</text>
<rect x="1646.9" y="300.5" width="48.7" height="25" fill="url(#bg1)"/>
<text x="1638.7" y="316.7" font-size="12.5" fill="#ececec" text-anchor="end" font-weight="normal" textLength="92.6" lengthAdjust="spacingAndGlyphs" stroke="#ececec" stroke-width="0.25">Van_Office_FW2</text>
<clipPath id="cl1646"><rect x="1616.9" y="330" width="273.0999999999999" height="20"/></clipPath><g clip-path="url(#cl1646)">
<text x="1646.9" y="345.8" font-size="12" fill="#ececec" text-anchor="middle" font-weight="normal" stroke="#ececec" stroke-width="0.22">0</text>
<text x="1685.5" y="345.8" font-size="12" fill="#ececec" text-anchor="middle" font-weight="normal" stroke="#ececec" stroke-width="0.22">1,000</text>
<text x="1724.1000000000001" y="345.8" font-size="12" fill="#ececec" text-anchor="middle" font-weight="normal" stroke="#ececec" stroke-width="0.22">2,000</text>
<text x="1762.7" y="345.8" font-size="12" fill="#ececec" text-anchor="middle" font-weight="normal" stroke="#ececec" stroke-width="0.22">3,000</text>
<text x="1801.3000000000002" y="345.8" font-size="12" fill="#ececec" text-anchor="middle" font-weight="normal" stroke="#ececec" stroke-width="0.22">4,000</text>
<text x="1839.9" y="345.8" font-size="12" fill="#ececec" text-anchor="middle" font-weight="normal" stroke="#ececec" stroke-width="0.22">5,000</text>
<text x="1878.5" y="345.8" font-size="12" fill="#ececec" text-anchor="middle" font-weight="normal" stroke="#ececec" stroke-width="0.22">6,000</text>
</g>
<text x="1283.5" y="473" font-size="20" fill="#f4f4f4" text-anchor="start" font-weight="normal" textLength="135" lengthAdjust="spacingAndGlyphs" stroke="#f4f4f4" stroke-width="0.22">Asset Discovery</text>
<line x1="1307" y1="490" x2="1333" y2="490" stroke="#36b4ec" stroke-width="2"/>
<circle cx="1320" cy="490" r="5" fill="#fff" stroke="#36b4ec" stroke-width="1.5"/>
<text x="1338" y="492.5" font-size="13" fill="#f0f0f0" text-anchor="start" font-weight="normal" textLength="57" lengthAdjust="spacingAndGlyphs" stroke="#f0f0f0" stroke-width="0.22">Endpoints</text>
<circle cx="1565.3" cy="469.4" r="6.5" fill="#fff"/>
<polyline points="1565.0,465.59999999999997 1565.0,469.7 1568.1,472.2" fill="none" stroke="#2e3236" stroke-width="1.5"/>
<text x="1576.6" y="474.2" font-size="14" fill="#ececec" text-anchor="start" font-weight="normal" textLength="265" lengthAdjust="spacingAndGlyphs" stroke="#ececec" stroke-width="0.22">Last 12 Months, Apr 01, 2020-Apr 01,2021</text>
<line x1="883" y1="514.5" x2="1847" y2="514.5" stroke="#bfbfbf" stroke-width="1" stroke-dasharray="4,4"/>
<text x="875.5" y="516.8" font-size="12.4" fill="#ececec" text-anchor="end" font-weight="normal" stroke="#ececec" stroke-width="0.22">8,000</text>
<line x1="878" y1="514.5" x2="883" y2="514.5" stroke="#3c4852" stroke-width="1"/>
<line x1="883" y1="567.5" x2="1847" y2="567.5" stroke="#bfbfbf" stroke-width="1" stroke-dasharray="4,4"/>
<text x="875.5" y="569.8" font-size="12.4" fill="#ececec" text-anchor="end" font-weight="normal" stroke="#ececec" stroke-width="0.22">6,000</text>
<line x1="878" y1="567.5" x2="883" y2="567.5" stroke="#3c4852" stroke-width="1"/>
<line x1="883" y1="619.5" x2="1847" y2="619.5" stroke="#bfbfbf" stroke-width="1" stroke-dasharray="4,4"/>
<text x="875.5" y="621.8" font-size="12.4" fill="#ececec" text-anchor="end" font-weight="normal" stroke="#ececec" stroke-width="0.22">4,000</text>
<line x1="878" y1="619.5" x2="883" y2="619.5" stroke="#3c4852" stroke-width="1"/>
<line x1="883" y1="672.5" x2="1847" y2="672.5" stroke="#bfbfbf" stroke-width="1" stroke-dasharray="4,4"/>
<text x="875.5" y="674.8" font-size="12.4" fill="#ececec" text-anchor="end" font-weight="normal" stroke="#ececec" stroke-width="0.22">2,000</text>
<line x1="878" y1="672.5" x2="883" y2="672.5" stroke="#3c4852" stroke-width="1"/>
<text x="875.5" y="726.8" font-size="12.4" fill="#ececec" text-anchor="end" font-weight="normal" stroke="#ececec" stroke-width="0.22">0</text>
<line x1="878" y1="724.5" x2="883" y2="724.5" stroke="#3c4852" stroke-width="1"/>
<line x1="883.5" y1="514" x2="883.5" y2="725" stroke="#3c4852" stroke-width="1"/>
<text x="883" y="741.7" font-size="12.8" fill="#f0f0f0" text-anchor="middle" font-weight="normal" textLength="101" lengthAdjust="spacingAndGlyphs" stroke="#f0f0f0" stroke-width="0.22">2020-04-01 12:00</text>
<text x="1015" y="741.7" font-size="12.8" fill="#f0f0f0" text-anchor="middle" font-weight="normal" textLength="101" lengthAdjust="spacingAndGlyphs" stroke="#f0f0f0" stroke-width="0.22">2020-05-21 12:00</text>
<text x="1147" y="741.7" font-size="12.8" fill="#f0f0f0" text-anchor="middle" font-weight="normal" textLength="101" lengthAdjust="spacingAndGlyphs" stroke="#f0f0f0" stroke-width="0.22">2020-07-10 12:00</text>
<text x="1279.5" y="741.7" font-size="12.8" fill="#f0f0f0" text-anchor="middle" font-weight="normal" textLength="101" lengthAdjust="spacingAndGlyphs" stroke="#f0f0f0" stroke-width="0.22">2020-08-29 12:00</text>
<text x="1411.5" y="741.7" font-size="12.8" fill="#f0f0f0" text-anchor="middle" font-weight="normal" textLength="101" lengthAdjust="spacingAndGlyphs" stroke="#f0f0f0" stroke-width="0.22">2020-10-18 12:00</text>
<text x="1543.5" y="741.7" font-size="12.8" fill="#f0f0f0" text-anchor="middle" font-weight="normal" textLength="101" lengthAdjust="spacingAndGlyphs" stroke="#f0f0f0" stroke-width="0.22">2020-12-07 11:00</text>
<text x="1676" y="741.7" font-size="12.8" fill="#f0f0f0" text-anchor="middle" font-weight="normal" textLength="101" lengthAdjust="spacingAndGlyphs" stroke="#f0f0f0" stroke-width="0.22">2021-01-26 11:00</text>
<text x="1808" y="741.7" font-size="12.8" fill="#f0f0f0" text-anchor="middle" font-weight="normal" textLength="101" lengthAdjust="spacingAndGlyphs" stroke="#f0f0f0" stroke-width="0.22">2021-03-17 12:00</text>
<path d="M883.0,724.6 L1676.7,724.6 L1678.2,640.0 L1679.8,522.0 L1681.0,560.0 L1682.0,680.0 L1683.2,712.0 L1684.5,718.5 L1686.0,721.5 L1687.5,722.6 L1689.0,722.4 L1690.0,720.5 L1690.5,721.8 L1691.5,722.0 L1692.0,722.6 L1693.0,720.0 L1693.5,722.5 L1695.0,723.0 L1695.0,722.4 L1696.5,723.0 L1698.0,722.5 L1699.5,722.3 L1701.0,722.0 L1702.0,721.5 L1702.5,723.1 L1704.0,722.8 L1705.5,723.2 L1707.0,722.0 L1708.5,722.2 L1710.0,723.2 L1711.5,721.7 L1712.0,722.0 L1713.0,721.8 L1714.5,722.3 L1716.0,722.3 L1717.5,723.0 L1718.0,721.0 L1719.0,723.3 L1720.5,722.5 L1722.0,723.2 L1723.5,723.0 L1725.0,722.9 L1726.5,723.3 L1728.0,722.6 L1729.5,722.6 L1730.5,716.0 L1731.0,722.0 L1731.5,714.5 L1732.5,717.0 L1732.5,722.5 L1733.5,715.5 L1734.0,722.3 L1735.0,722.0 L1735.5,722.5 L1737.0,722.2 L1738.5,722.6 L1740.0,722.9 L1741.5,721.7 L1743.0,721.7 L1744.5,722.0 L1746.0,722.2 L1747.0,720.0 L1747.5,722.8 L1749.0,722.9 L1750.0,722.0 L1750.5,722.8 L1752.0,720.5 L1752.0,723.2 L1753.5,722.1 L1755.0,722.7 L1756.5,721.9 L1758.0,722.7 L1759.5,721.8 L1761.0,721.9 L1762.5,723.3 L1764.0,723.0 L1765.5,721.8 L1766.0,719.2 L1767.0,722.5 L1768.0,722.5 L1768.5,721.7 L1770.0,722.7 L1771.5,723.2 L1773.0,722.3 L1774.5,722.1 L1776.0,722.9 L1777.5,723.2 L1779.0,722.8 L1780.5,721.8 L1782.0,722.1 L1783.5,723.1 L1784.0,721.5 L1785.0,722.9 L1786.5,723.1 L1788.0,723.2 L1789.5,722.0 L1791.0,723.0 L1792.5,722.4 L1794.0,722.6 L1795.5,723.0 L1797.0,722.1 L1798.5,723.1 L1800.0,722.3 L1801.5,723.1 L1803.0,722.6 L1804.5,723.0 L1806.0,722.9 L1807.5,721.7 L1809.0,722.0 L1810.5,722.8 L1812.0,721.9 L1813.5,723.0 L1815.0,722.7 L1816.5,721.9 L1818.0,722.3 L1819.5,723.1 L1821.0,719.5 L1821.0,721.7 L1822.5,723.0 L1823.0,722.5 L1824.0,722.9 L1825.5,722.1 L1827.0,722.8 L1828.0,722.0 L1828.5,722.8 L1830.0,723.2 L1831.5,722.9 L1833.0,721.8 L1834.5,722.1 L1836.0,721.3 L1837.5,721.4 L1838.0,721.5 L1839.0,721.0 L1840.5,719.9 L1842.0,720.5 L1842.0,720.4 L1843.5,720.0 L1844.0,720.8 L1845.0,719.2 L1846.5,720.0 L1846.6,720.0" fill="none" stroke="#36b4ec" stroke-width="2" stroke-linejoin="round"/>
<circle cx="883" cy="724.6" r="1.8" fill="#e8f6ff"/>
<circle cx="1015" cy="724.6" r="1.8" fill="#e8f6ff"/>
<circle cx="1147" cy="724.6" r="1.8" fill="#e8f6ff"/>
<circle cx="1279.5" cy="724.6" r="1.8" fill="#e8f6ff"/>
<circle cx="1411.5" cy="724.6" r="1.8" fill="#e8f6ff"/>
<circle cx="1543.5" cy="724.6" r="1.8" fill="#e8f6ff"/>
<circle cx="1676" cy="724.6" r="1.8" fill="#e8f6ff"/>
<circle cx="1808" cy="724.6" r="1.8" fill="#e8f6ff"/>
<text x="1012.9" y="819" font-size="20" fill="#f4f4f4" text-anchor="start" font-weight="normal" textLength="125" lengthAdjust="spacingAndGlyphs" stroke="#f4f4f4" stroke-width="0.22">Asset Changes</text>
<line x1="1031.6" y1="834.5" x2="1056.5" y2="834.5" stroke="#36b4ec" stroke-width="2"/>
<circle cx="1044" cy="834.5" r="5" fill="#fff" stroke="#36b4ec" stroke-width="1.5"/>
<text x="1062.2" y="838.5" font-size="13" fill="#f0f0f0" text-anchor="start" font-weight="normal" textLength="57" lengthAdjust="spacingAndGlyphs" stroke="#f0f0f0" stroke-width="0.22">Endpoints</text>
<circle cx="1537.8" cy="814.1" r="6.5" fill="#fff"/>
<polyline points="1537.5,810.3000000000001 1537.5,814.4 1540.6,816.9" fill="none" stroke="#2e3236" stroke-width="1.5"/>
<text x="1549" y="818.9" font-size="14" fill="#ececec" text-anchor="start" font-weight="normal" textLength="265" lengthAdjust="spacingAndGlyphs" stroke="#ececec" stroke-width="0.22">Last 12 Months, Apr 01, 2020-Apr 01,2021</text>
<line x1="350" y1="859.5" x2="1825" y2="859.5" stroke="#bfbfbf" stroke-width="1" stroke-dasharray="4,4"/>
<line x1="344" y1="859.5" x2="349.5" y2="859.5" stroke="#3c4852" stroke-width="1"/>
<text x="341" y="861.9" font-size="12.4" fill="#ececec" text-anchor="end" font-weight="normal" stroke="#ececec" stroke-width="0.22">7,000</text>
<line x1="350" y1="889.5" x2="1825" y2="889.5" stroke="#bfbfbf" stroke-width="1" stroke-dasharray="4,4"/>
<line x1="344" y1="889.5" x2="349.5" y2="889.5" stroke="#3c4852" stroke-width="1"/>
<text x="341" y="891.9" font-size="12.4" fill="#ececec" text-anchor="end" font-weight="normal" stroke="#ececec" stroke-width="0.22">6,000</text>
<line x1="350" y1="919.5" x2="1825" y2="919.5" stroke="#bfbfbf" stroke-width="1" stroke-dasharray="4,4"/>
<line x1="344" y1="919.5" x2="349.5" y2="919.5" stroke="#3c4852" stroke-width="1"/>
<text x="341" y="921.9" font-size="12.4" fill="#ececec" text-anchor="end" font-weight="normal" stroke="#ececec" stroke-width="0.22">5,000</text>
<line x1="349.5" y1="859" x2="349.5" y2="927" stroke="#3c4852" stroke-width="1"/>
<path d="M1568.5,930 L1569.5,877.8 L1570.5,930" fill="none" stroke="#36b4ec" stroke-width="2.2"/>
<rect x="1902" y="76" width="16" height="851" fill="#f0f0f0"/>
<rect x="1902" y="76" width="1" height="851" fill="#ffffff"/>
<path d="M1906.8,86.8 L1910.5,83 L1914.2,86.8 Z" fill="#a3a3a3"/>
<rect x="1904" y="93" width="13" height="343" fill="#c1c1c1"/>
<path d="M1907,925 L1914,925 L1910.5,929 Z" fill="#505050"/>
</svg>
</body></html>
